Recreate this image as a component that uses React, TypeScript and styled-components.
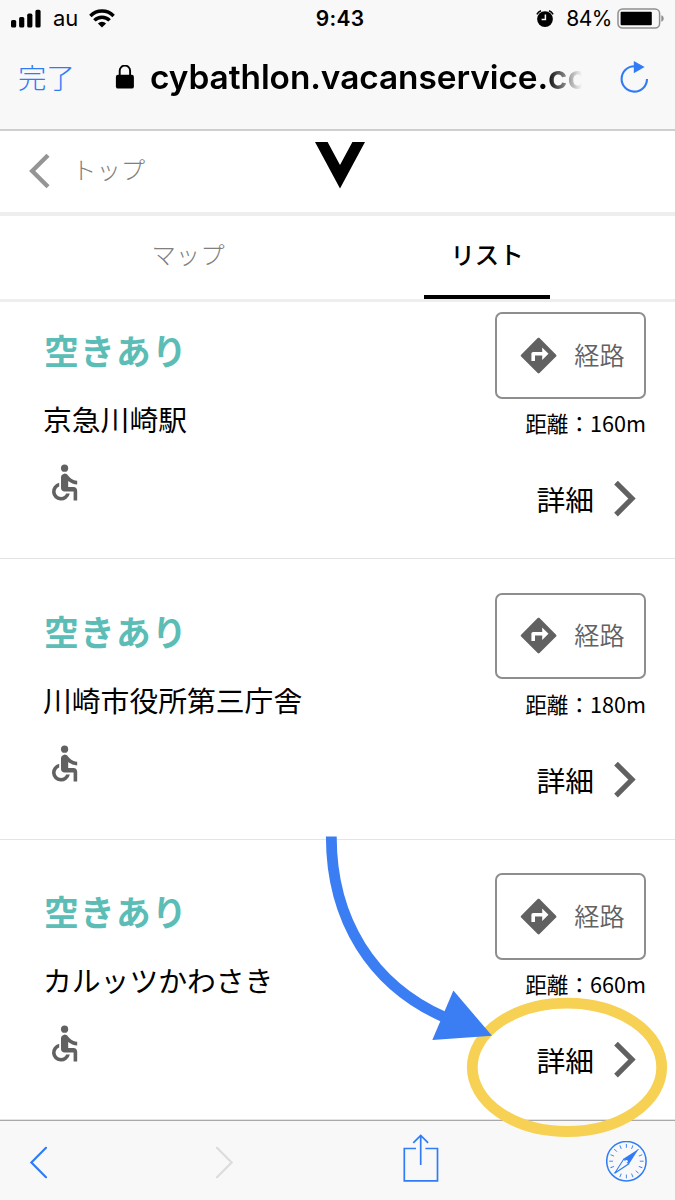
import React from 'react';
import styled, { createGlobalStyle } from 'styled-components';
import { MdAccessible } from 'react-icons/md';

const BLUE = '#2f7cf6';
const SYSTEM = `Inter, 'Noto Sans CJK JP', sans-serif`;
const PAGE = `'Noto Sans CJK JP', sans-serif`;

const GlobalStyle = createGlobalStyle`
  * { box-sizing: border-box; }
  body { margin: 0; background: #fff; }
  svg { display: block; flex: none; }
`;

const Screen = styled.div`
  position: relative;
  width: 675px;
  height: 1200px;
  display: flex;
  flex-direction: column;
  overflow: hidden;
  background: #fff;
  color: #000;
  font-family: ${PAGE};
`;

const BrowserChrome = styled.header`
  flex: none;
  height: 131px;
  background: #f8f8f8;
  border-bottom: 2px solid #cfcfcf;
  font-family: ${SYSTEM};
`;

const StatusBar = styled.div`
  display: grid;
  grid-template-columns: 1fr auto 1fr;
  align-items: center;
  height: 37px;
  padding: 0 10px 0 11px;
  line-height: 37px;
`;

const StatusGroup = styled.div<{ $end?: boolean }>`
  display: flex;
  align-items: center;
  justify-content: ${(p) => (p.$end ? 'flex-end' : 'flex-start')};
`;

const StatusText = styled.span<{ $size: number; $gap?: string; $spacing?: string }>`
  font-size: ${(p) => p.$size}px;
  margin: ${(p) => p.$gap ?? '0'};
  letter-spacing: ${(p) => p.$spacing ?? '0'};
`;

const Clock = styled.span`
  padding-left: 4px;
  font-size: 21px;
  font-weight: 600;
  letter-spacing: 0.3px;
`;

const AddressBar = styled.div`
  display: flex;
  align-items: center;
  height: 80px;
  padding: 0 26px 0 18px;
`;

const DoneLink = styled.span`
  width: 97px;
  padding-bottom: 2px;
  color: ${BLUE};
  font-size: 28.4px;
  font-weight: 300;
`;

const Url = styled.div`
  width: 450px;
  margin-left: 16px;
  white-space: nowrap;
  font-size: 33.4px;
  font-weight: 600;
  line-height: 48px;
  letter-spacing: -0.05px;
  mask-image: linear-gradient(to right, #000 396px, transparent 432px);
`;

const ReloadSlot = styled.div`
  margin-left: auto;
`;

const SiteHeader = styled.div`
  flex: none;
  display: grid;
  grid-template-columns: 1fr auto 1fr;
  height: 85px;
  padding: 0 0 0 29px;
  border-bottom: 4px solid #eeeeee;
`;

const BackLink = styled.div`
  display: flex;
  align-items: center;
  gap: 22px;
  height: 79px;
`;

const BackLabel = styled.span`
  padding-bottom: 4px;
  color: #808080;
  font-size: 24.4px;
  font-weight: 300;
`;

const LogoSlot = styled.div`
  padding: 11px 24px 0 0;
`;

const Tabs = styled.nav`
  flex: none;
  display: flex;
  justify-content: center;
  gap: 173px;
  height: 86px;
  border-bottom: 3px solid #eeeeee;
`;

const Tab = styled.div<{ $active?: boolean }>`
  width: 126px;
  height: 83px;
  text-align: center;
  font-size: 24.4px;
  line-height: 76px;
  font-weight: ${(p) => (p.$active ? 500 : 300)};
  color: ${(p) => (p.$active ? '#000' : '#808080')};
  border-bottom: 4px solid ${(p) => (p.$active ? '#000' : 'transparent')};
`;

const List = styled.main`
  flex: 1;
  overflow: hidden;
  padding-top: 10px;
`;

const Row = styled.section`
  display: flex;
  justify-content: space-between;
  height: 247px;
  padding: 0 29px 0 43px;
  border-bottom: 1px solid #e4e4e4;

  & + & {
    height: 280.6px;
    padding-top: 33.7px;
  }
`;

const Info = styled.div`
  display: flex;
  flex-direction: column;
`;

const Vacancy = styled.h2`
  margin: 11px 0 0 1px;
  color: #5bbdb6;
  font-size: 34.8px;
  font-weight: 700;
  line-height: 54px;
  letter-spacing: 1.2px;
`;

const PlaceName = styled.div`
  margin: 20px 0 20px;
  font-size: 28.8px;
  line-height: 44px;
`;

const Actions = styled.div`
  display: flex;
  flex-direction: column;
  align-items: flex-end;
`;

const RouteButton = styled.div`
  display: flex;
  align-items: center;
  gap: 14px;
  width: 151px;
  height: 86.6px;
  padding: 0 0 0 20px;
  border: 2px solid #8e8e8e;
  border-radius: 7px;
  color: #616161;
`;

const RouteLabel = styled.span`
  padding-bottom: 3px;
  font-size: 25.2px;
  font-weight: 350;
`;

const Distance = styled.div`
  margin-top: 8.4px;
  font-size: 21.6px;
  line-height: 32px;
`;

const DetailLink = styled.div`
  display: flex;
  align-items: center;
  gap: 20px;
  height: 44px;
  margin: 38px 10px 0 0;
  font-size: 28.8px;
  line-height: 44px;
`;

const Toolbar = styled.footer`
  flex: none;
  display: flex;
  align-items: center;
  justify-content: space-between;
  height: 80px;
  padding: 3px 27px 0 29px;
  background: #f8f8f8;
  border-top: 1px solid #a9a9a9;
`;

const ShareSlot = styled.div`
  padding: 0 0 8px 2px;
`;

const Annotation = styled.svg`
  position: absolute;
  left: 0;
  top: 0;
  pointer-events: none;
`;

const Signal = () => (
  <svg width="31" height="20" viewBox="0 0 31 20">
    <rect x="0" y="11" width="5.2" height="7.6" rx="1.6" />
    <rect x="8.1" y="8" width="5.2" height="10.6" rx="1.6" />
    <rect x="16.2" y="4.6" width="5.2" height="14" rx="1.6" />
    <rect x="24.4" y="0.8" width="5.2" height="17.8" rx="1.6" />
  </svg>
);

const Wifi = () => (
  <svg width="26" height="20" viewBox="0 0 26 20">
    <g fill="none" stroke="#000" strokeWidth="3.5">
      <path d="M1.4 6.9a16.4 16.4 0 0 1 23.2 0" />
      <path d="M5.4 11.4a10.6 10.6 0 0 1 15.2 0" />
    </g>
    <path d="M13 18.6l-4.1-4.2a5.8 5.8 0 0 1 8.2 0z" />
  </svg>
);

const Alarm = () => (
  <svg width="18" height="18" viewBox="0 0 18 18">
    <circle cx="9" cy="9.1" r="7.9" />
    <path d="M.9 4.4A8 8 0 0 1 5 .7M17.1 4.4A8 8 0 0 0 13 .7" fill="none" stroke="#000" strokeWidth="1.5" />
    <path d="M9.4 4.4v5.2H5.6" fill="none" stroke="#f8f8f8" strokeWidth="1.5" />
  </svg>
);

const Battery = () => (
  <svg width="48" height="21" viewBox="0 0 48 21">
    <rect x="1" y="1" width="41.6" height="19" rx="4.5" fill="none" stroke="#8f8f8f" strokeWidth="1.5" />
    <rect x="3.6" y="3.8" width="31.2" height="13.4" rx="1" />
    <path d="M44.3 7.2c3.2.8 3.2 5.8 0 6.6z" fill="#8f8f8f" />
  </svg>
);

const Lock = () => (
  <svg width="19" height="25" viewBox="0 0 19 25">
    <rect x="0.9" y="9.8" width="18" height="13.8" rx="2.2" />
    <path d="M4.7 10.4V5.8a5.2 5.2 0 0 1 10.4 0v4.6" fill="none" stroke="#000" strokeWidth="1.9" />
  </svg>
);

const Reload = () => (
  <svg width="29" height="33" viewBox="0 0 29 33">
    <path d="M14.6 5.2A12.7 12.7 0 1 0 27 17.9" fill="none" stroke={BLUE} strokeWidth="2.1" />
    <path d="M13.8 0v12.2L24.6 6z" fill={BLUE} />
  </svg>
);

const Directions = () => (
  <svg width="43.2" height="43.2" viewBox="0 0 24 24" fill="#616161">
    <path d="M21.71 11.49l-9.2-9.2c-.28-.28-.73-.28-1.01 0l-9.2 9.2c-.28.28-.28.73 0 1.01l9.2 9.2c.28.28.73.28 1.01 0l9.2-9.2c.28-.28.28-.73 0-1.01zM14 14.5V12h-4v3H8v-4c0-.55.45-1 1-1h5V7.5l3.5 3.5-3.5 3.5z" />
  </svg>
);

const Chevron = () => (
  <svg width="22" height="36" viewBox="0 0 22 36">
    <path d="M2 1.6l16 16-16 16" fill="none" stroke="#616161" strokeWidth="5.2" />
  </svg>
);

const BackChevron = () => (
  <svg width="21" height="36" viewBox="0 0 21 36">
    <path d="M19 2.2L3.2 18 19 33.8" fill="none" stroke="#959595" strokeWidth="4.4" />
  </svg>
);

const Logo = () => (
  <svg width="50" height="47" viewBox="0 0 50 47">
    <path d="M0 0h12.6L25 23 37.4 0H50L25 46.5z" />
  </svg>
);

const NavChevron = ({ forward }: { forward?: boolean }) => (
  <svg width="19" height="33" viewBox="0 0 19 33">
    <path
      d={forward ? 'M2 1.8l14.6 14.7L2 31.2' : 'M17 1.8L2.4 16.5 17 31.2'}
      fill="none"
      stroke={forward ? '#dcdcdc' : BLUE}
      strokeWidth="2.2"
      strokeLinecap="round"
    />
  </svg>
);

const Share = () => (
  <svg width="36" height="48" viewBox="0 0 36 48">
    <path d="M13 14.5H1.3v32.4h33.2V14.5H22.4M17.7 31V1.6M10.3 8.8l7.4-7.4 7.4 7.4" fill="none" stroke={BLUE} strokeWidth="1.7" />
  </svg>
);

const TICKS = Array.from({ length: 16 }, (_, i) => i * 22.5 + 0);

const Compass = () => (
  <svg width="42" height="42" viewBox="0 0 42 42">
    <circle cx="20.4" cy="20.2" r="19.7" fill="none" stroke={BLUE} strokeWidth="1.5" />
    {TICKS.map((a) => (
      <path key={a} d="M20.4 3v3.8" stroke={BLUE} strokeWidth="0.9" transform={`rotate(${a} 20.4 20.2)`} />
    ))}
    <path d="M32.6 8L23.2 22.8 17.8 17.6z" fill={BLUE} />
    <path d="M8.7 32.2l9.1-14.2 5 4.8z" fill="#f8f8f8" stroke={BLUE} strokeWidth="1.1" />
    <circle cx="20.4" cy="20.2" r="1.3" fill="#f8f8f8" />
  </svg>
);

const PLACES = [
  { name: '京急川崎駅', distance: '160m' },
  { name: '川崎市役所第三庁舎', distance: '180m' },
  { name: 'カルッツかわさき', distance: '660m' },
];

export default function App() {
  return (
    <Screen>
      <GlobalStyle />
      <BrowserChrome>
        <StatusBar>
          <StatusGroup>
            <Signal />
            <StatusText $size={22} $gap="0 11px 0 11px">au</StatusText>
            <Wifi />
          </StatusGroup>
          <Clock>9:43</Clock>
          <StatusGroup $end>
            <Alarm />
            <StatusText $size={21} $gap="0 5px 0 12px" $spacing="-0.5px">84%</StatusText>
            <Battery />
          </StatusGroup>
        </StatusBar>
        <AddressBar>
          <DoneLink>完了</DoneLink>
          <Lock />
          <Url>cybathlon.vacanservice.co</Url>
          <ReloadSlot>
            <Reload />
          </ReloadSlot>
        </AddressBar>
      </BrowserChrome>

      <SiteHeader>
        <BackLink>
          <BackChevron />
          <BackLabel>トップ</BackLabel>
        </BackLink>
        <LogoSlot>
          <Logo />
        </LogoSlot>
      </SiteHeader>

      <Tabs>
        <Tab>マップ</Tab>
        <Tab $active>リスト</Tab>
      </Tabs>

      <List>
        {PLACES.map((place) => (
          <Row key={place.name}>
            <Info>
              <Vacancy>空きあり</Vacancy>
              <PlaceName>{place.name}</PlaceName>
              <MdAccessible size={43.2} color="#616161" />
            </Info>
            <Actions>
              <RouteButton>
                <Directions />
                <RouteLabel>経路</RouteLabel>
              </RouteButton>
              <Distance>距離：{place.distance}</Distance>
              <DetailLink>
                詳細
                <Chevron />
              </DetailLink>
            </Actions>
          </Row>
        ))}
      </List>

      <Toolbar>
        <NavChevron />
        <NavChevron forward />
        <ShareSlot>
          <Share />
        </ShareSlot>
        <Compass />
      </Toolbar>

      <Annotation width="675" height="1200" viewBox="0 0 675 1200">
        <ellipse cx="567" cy="1067.3" rx="94.7" ry="64.2" fill="none" stroke="#f7d154" strokeWidth="10.8" />
        <path d="M331.3 836.6C331.3 920 372 985 444 1017" fill="none" stroke="#3b7df2" strokeWidth="10.8" />
        <path d="M453.4 990.5L492 1035.8 432.3 1040z" fill="#3b7df2" />
      </Annotation>
    </Screen>
  );
}
